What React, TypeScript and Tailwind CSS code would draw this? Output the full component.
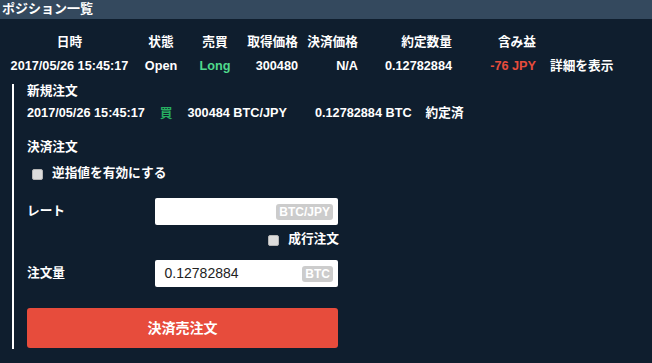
import React from "react";

const font = { fontFamily: '"Liberation Sans", Arial, "Noto Sans CJK JP", sans-serif' };

function Checkbox() {
  return <span className="inline-block w-[11px] h-[11px] bg-[#dcdcdc] border border-[#b5b5b5] rounded-[2px]" />;
}

function Badge({ children }: { children: React.ReactNode }) {
  return (
    <span className="inline-flex items-center h-[16px] px-[3px] rounded-[3px] bg-[#cccccc] text-white text-[12px] font-bold leading-none">
      {children}
    </span>
  );
}

export default function App() {
  const cols = "grid grid-cols-[129px_54px_54px_61px_60px_94px_84px_1fr] ml-[5px]";
  return (
    <div className="w-[652px] h-[363px] bg-[#0f1e2e] text-white overflow-hidden" style={font}>
      <div className="h-[19px] bg-[#34495e] pl-[2px] text-[13px] font-bold leading-[17px]">ポジション一覧</div>
      <div className="text-[12.7px] font-bold">
        <div className={`${cols} mt-[14px] h-[18px] items-center`}>
          <div className="text-center">日時</div>
          <div className="text-center">状態</div>
          <div className="text-center">売買</div>
          <div className="text-right pr-[5px]">取得価格</div>
          <div className="text-right pr-[5px]">決済価格</div>
          <div className="text-right pr-[5px]">約定数量</div>
          <div className="text-right pr-[5px]">含み益</div>
          <div />
        </div>
        <div className={`${cols} mt-[6px] h-[18px] items-center`}>
          <div className="text-center whitespace-nowrap">2017/05/26 15:45:17</div>
          <div className="text-center">Open</div>
          <div className="text-center text-[#4fd98c]">Long</div>
          <div className="text-right pr-[5px]">300480</div>
          <div className="text-right pr-[5px]">N/A</div>
          <div className="text-right pr-[5px]">0.12782884</div>
          <div className="text-right pr-[5px] text-[#e74c3c]">-76 JPY</div>
          <div className="pl-[9px] whitespace-nowrap">詳細を表示</div>
        </div>
        <div className="ml-[12px] mt-[9px] border-l-2 border-white pl-[13px] w-[326px] pb-[1px]">
          <div className="h-[14px] leading-[14px]">新規注文</div>
          <div className="flex items-center h-[18px] mt-[7px] whitespace-nowrap">
            <span>2017/05/26 15:45:17</span>
            <span className="ml-[15px] text-[#27ae60]">買</span>
            <span className="ml-[15px]">300484 BTC/JPY</span>
            <span className="ml-[28px]">0.12782884 BTC</span>
            <span className="ml-[14px]">約定済</span>
          </div>
          <div className="h-[18px] leading-[18px] mt-[15px]">決済注文</div>
          <div className="flex items-center h-[18px] mt-[9px] pl-[5px]">
            <Checkbox />
            <span className="ml-[9px]">逆指値を有効にする</span>
          </div>
          <div className="flex items-center h-[27px] mt-[15px]">
            <span className="w-[128px]">レート</span>
            <div className="w-[184px] h-[27px] bg-white rounded-[2px] flex items-center justify-end pr-[5px]">
              <Badge>BTC/JPY</Badge>
            </div>
          </div>
          <div className="flex items-center justify-end h-[16px] mt-[7px] w-[312px]">
            <Checkbox />
            <span className="ml-[9px]">成行注文</span>
          </div>
          <div className="flex items-center h-[27px] mt-[12px]">
            <span className="w-[128px]">注文量</span>
            <div className="w-[184px] h-[27px] bg-white rounded-[2px] flex items-center justify-between pl-[10px] pr-[5px]">
              <span className="text-[#222222] text-[14px] font-normal">0.12782884</span>
              <Badge>BTC</Badge>
            </div>
          </div>
          <button className="mt-[21px] w-[311px] h-[40px] bg-[#e74c3c] rounded-[3px] text-white text-[14px] font-bold flex items-center justify-center" style={font}>
            決済売注文
          </button>
        </div>
      </div>
    </div>
  );
}
